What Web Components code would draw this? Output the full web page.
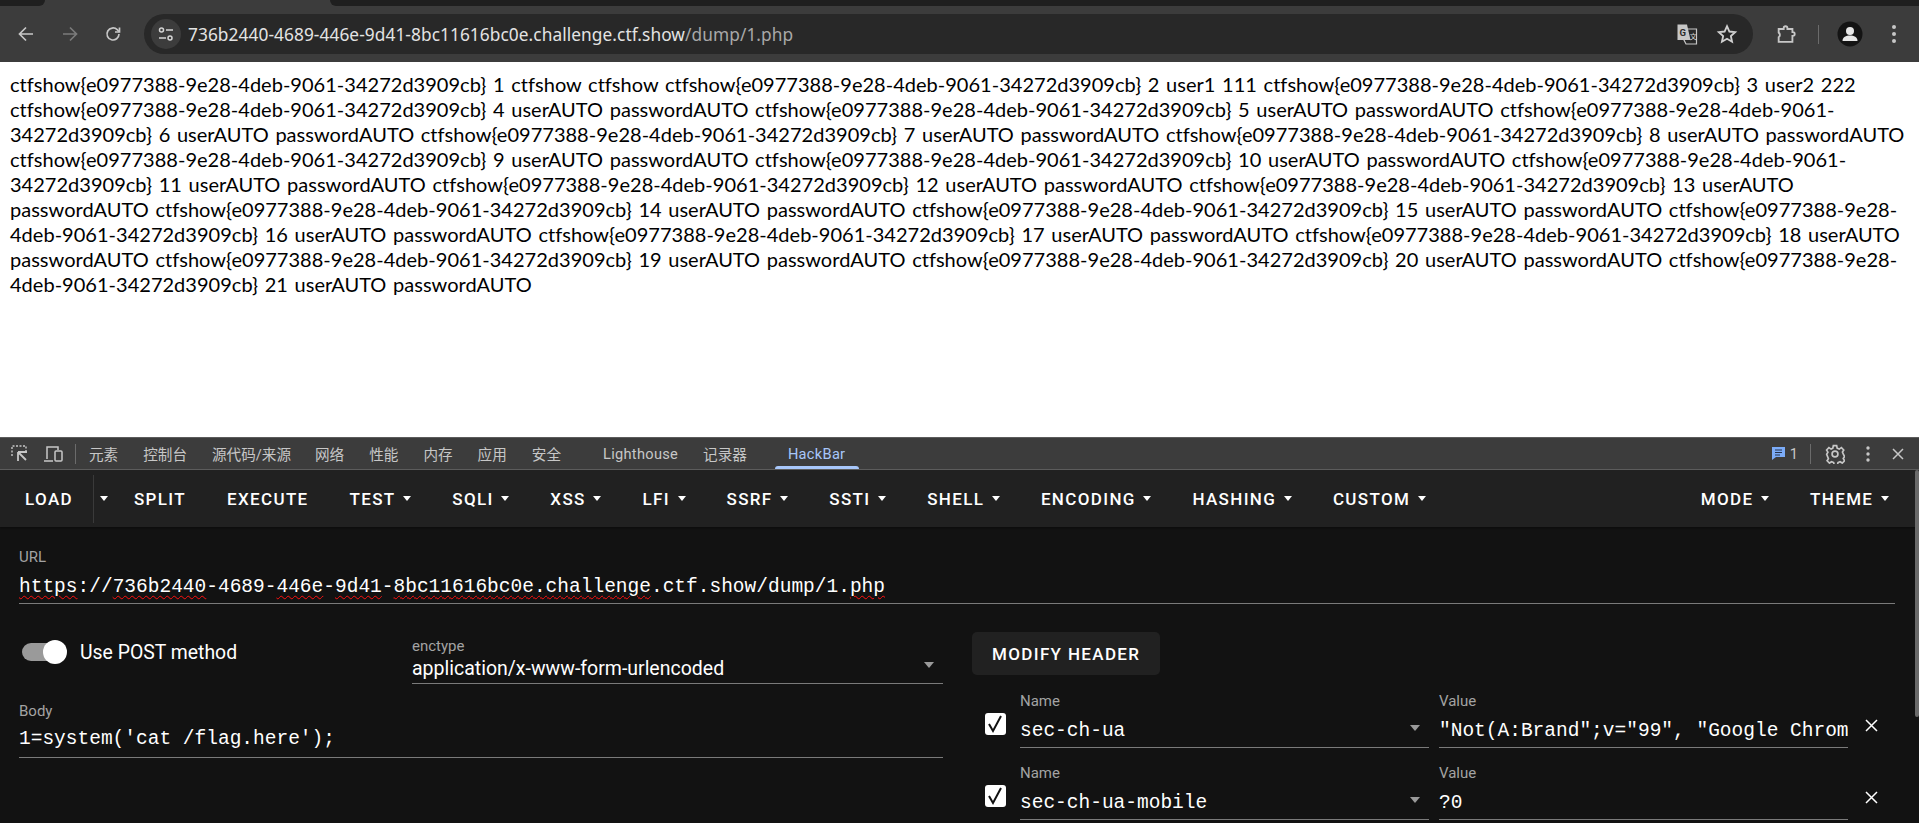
<!DOCTYPE html>
<html><head><meta charset="utf-8"><style>
html,body{margin:0;padding:0;height:100%;overflow:hidden;background:#fff}
</style></head><body>
<template id="t-app"><style>
:host{display:flex;flex-direction:column;height:823px;overflow:hidden;font-family:Roboto,"Noto Sans CJK SC",sans-serif}
</style><browser-bar></browser-bar><dump-page></dump-page><dev-tabs></dev-tabs><hack-bar></hack-bar></template>

<template id="t-browser"><style>
:host{display:block;height:62px;background:#3c3c3c;flex:none}
.strip{height:6px;display:flex;background:#3c3c3c}
.strip i{display:block;height:6px;background:#1f1f1f}
.l{width:45px;border-radius:0 0 9px 0}
.r{flex:1;margin-left:285px;border-radius:0 0 0 9px}
.bar{height:56px;background:#3c3c3c;display:flex;align-items:center;color:#c7c7c7;position:relative}
.nav{display:grid;place-items:center;width:24px;height:24px}
.omni{flex:1;height:40px;background:#282828;border-radius:20px;display:flex;align-items:center;font:17.3px "Noto Sans",sans-serif;color:#e3e3e3;white-space:nowrap}
.tune{width:30px;height:30px;margin-left:7px;border-radius:50%;background:#3c3c3c;display:grid;place-items:center}
.url{margin-left:7px;letter-spacing:.07px}.url span{color:#a8a8a8}
svg{display:block}
</style>
<div class="strip"><i class="l"></i><i class="r"></i></div>
<div class="bar">
 <span class="nav" style="margin-left:14px"><svg width="20" height="20" viewBox="0 0 20 20" fill="none" stroke="#c7c7c7" stroke-width="1.7"><path d="M17 10H4M10 3.500 3.500 10l6.500 6.500"/></svg></span>
 <span class="nav" style="margin-left:20px"><svg width="20" height="20" viewBox="0 0 20 20" fill="none" stroke="#7b7b7b" stroke-width="1.7"><path d="M3 10h13M10 3.500l6.500 6.500L10 16.500"/></svg></span>
 <span class="nav" style="margin-left:19px"><svg width="20" height="20" viewBox="0 0 20 20" fill="none" stroke="#c7c7c7" stroke-width="1.7"><path d="M16 10a6 6 0 1 1-1.800-4.300L16.500 8"/><path d="M16.500 3.500V8H12" /></svg></span>
 <div class="omni" style="margin-left:19px;margin-right:22px">
  <span class="tune"><svg width="18" height="18" viewBox="0 0 18 18" fill="none" stroke="#d5d5d5" stroke-width="1.500"><path d="M9 5h7M2 13h7"/><circle cx="4.500" cy="5" r="2"/><circle cx="13" cy="13" r="2"/></svg></span>
  <span class="url">736b2440-4689-446e-9d41-8bc11616bc0e.challenge.ctf.show<span>/dump/1.php</span></span>
  <span style="flex:1"></span>
  <svg width="24" height="24" viewBox="0 0 24 24" style="margin-right:17px"><path d="M9 7h12.500v15H11l-2-4z" fill="none" stroke="#c7c7c7" stroke-width="1.200"/><path d="M2.500 2.500h9.500l3.500 15.500H2.500z" fill="#c7c7c7"/><text x="4.500" y="14" font-size="9.500" font-weight="700" font-family="Roboto" fill="#2a2a2a">G</text><text x="14.700" y="16.500" font-size="7" font-family="Noto Sans CJK SC" fill="#d5d5d5">文</text></svg>
  <svg width="22" height="22" viewBox="0 0 24 24" style="margin-right:15px" fill="none" stroke="#d0d0d0" stroke-width="2"><path d="M12 3.500l2.600 5.800 6.300.7-4.700 4.200 1.300 6.200L12 17.200l-5.500 3.200 1.300-6.200L3.100 10l6.300-.7z"/></svg>
 </div>
 <svg width="22" height="22" viewBox="0 0 24 24" fill="none" stroke="#c7c7c7" stroke-width="2" style="margin-right:21px"><path d="M4 6.500h5.500V5.500a2 2 0 0 1 4 0v1H19V10h.5a2 2 0 0 1 0 4H19v6.500H4v-5a3 3 0 0 0 0-5z"/></svg>
 <i style="width:1px;height:19px;background:#6b6b6b;margin-right:18px"></i>
 <svg width="26" height="26" viewBox="0 0 26 26" style="margin-right:28px"><circle cx="13" cy="13" r="12.500" fill="#141414"/><circle cx="13" cy="10" r="4" fill="#e8e8e8"/><path d="M5.500 20c0-4 3.500-5.500 7.500-5.500s7.500 1.500 7.500 5.500z" fill="#e8e8e8"/></svg>
 <svg width="6" height="20" viewBox="0 0 6 20" fill="#c7c7c7" style="margin-right:22px"><circle cx="3" cy="3" r="2"/><circle cx="3" cy="10" r="2"/><circle cx="3" cy="17" r="2"/></svg>
</div></template>

<template id="t-dump"><style>
:host{display:block;height:375px;flex:none;background:#fff;color:#000;font:20px/25px Lato,"Noto Sans",sans-serif;letter-spacing:.02px;word-spacing:1.5px;padding:10px 10px 0;box-sizing:border-box;white-space:nowrap}
</style><slot></slot></template>

<template id="t-tabs"><style>
:host{display:flex;align-items:center;height:33px;flex:none;background:#3c3c3c;border-top:1px solid #5c5c5c;border-bottom:1px solid #5c5c5c;box-sizing:border-box;color:#c7c7c7;font:14.600px Roboto,"Noto Sans CJK SC",sans-serif;position:relative}
span{position:relative;white-space:nowrap}
svg{display:block}
.la{letter-spacing:.3px}
.on{color:#a8c7fa}
.on::after{content:"";position:absolute;left:-13px;right:-14px;top:21px;height:3px;background:#a8c7fa;border-radius:3px 3px 0 0}
</style>
 <svg style="margin-left:10px" width="19" height="19" viewBox="0 0 19 19" fill="none" stroke="#c7c7c7" stroke-width="1.400"><path stroke-dasharray="2 1.500" d="M2 12V2h14v5"/><path d="M8 8h9M8 8v9M8 8l8 8" stroke-width="1.800"/></svg>
 <svg style="margin-left:14px" width="20" height="18" viewBox="0 0 20 18" fill="none" stroke="#c7c7c7" stroke-width="1.500"><path d="M4 14V2h11v3M1 16h9"/><rect x="12" y="6" width="7" height="10" rx="1"/></svg>
 <i style="width:1px;height:20px;background:#6b6b6b;margin:0 13px 0 12px"></i>
 <span>元素</span><span style="margin-left:25px">控制台</span><span style="margin-left:25px">源代码/来源</span><span style="margin-left:24px">网络</span><span style="margin-left:25px">性能</span><span style="margin-left:25px">内存</span><span style="margin-left:25px">应用</span><span style="margin-left:25px">安全</span><span class="la" style="margin-left:42px">Lighthouse</span><span style="margin-left:25px">记录器</span><span class="on la" style="margin-left:41px">HackBar</span>
 <span style="flex:1"></span>
 <svg width="15" height="15" viewBox="0 0 15 15" style="margin-right:4px"><path d="M1 1h13v10H5l-4 3z" fill="#7cacf8"/><path d="M4 4h7M4 6.500h7M4 9h5" stroke="#24324d" stroke-width="1.200"/></svg>
 <span style="color:#c7c7c7">1</span>
 <i style="width:1px;height:20px;background:#6b6b6b;margin:0 14px 0 12px"></i>
 <svg width="20" height="20" viewBox="0 0 24 24" fill="none" stroke="#c7c7c7" stroke-width="2" style="margin-right:21px"><circle cx="12" cy="12" r="3.500"/><path d="M10 2h4l.6 3 2.500 1.100 2.600-1.700 2.800 2.800-1.600 2.600 1.100 2.500 1.500 2.700-1.600 2.500 1.600 2.600-2.800 2.800-2.600-1.600-2.500 1-.6 3h-4l-.6-3-2.500-1-2.600 1.600-2.800-2.800 1.600-2.600L2 12.300l1.500-2.500L1.900 7.200l2.800-2.800 2.600 1.700L9.400 5z"/></svg>
 <svg width="4" height="16" viewBox="0 0 4 16" fill="#c7c7c7" style="margin-right:21px"><circle cx="2" cy="2" r="1.700"/><circle cx="2" cy="8" r="1.700"/><circle cx="2" cy="14" r="1.700"/></svg>
 <svg width="14" height="14" viewBox="0 0 14 14" stroke="#c7c7c7" stroke-width="1.500" style="margin-right:14px"><path d="M2 2l10 10M12 2 2 12"/></svg>
</template>

<template id="t-hack"><style>
:host{display:block;flex:1;min-height:0;background:#121212;position:relative;overflow:hidden;color:#fff}
.sb{position:absolute;right:0;top:0;width:4px;height:247px;background:#6a6a6a;border-radius:2px}
main{display:block;padding:21px 24px 0 19px}
.cols{display:grid;grid-template-columns:924px 1fr;column-gap:29px;margin-top:28px}
.opts{display:grid;grid-template-columns:393px 1fr;margin-top:5px;margin-bottom:18px}
</style>
<hb-toolbar></hb-toolbar>
<main>
 <hb-field label="URL"><span><u>https</u>://<u>736b2440</u>-4689-<u>446e</u>-<u>9d41</u>-<u>8bc11616bc0e.challenge</u>.ctf.show/dump/1.<u>php</u></span></hb-field>
 <div class="cols">
  <div>
   <div class="opts"><hb-switch>Use POST method</hb-switch><hb-field label="enctype" sans caret style="height:47px;--vt:19px;--ct:25px">application/x-www-form-urlencoded</hb-field></div>
   <hb-field label="Body" style="--vt:24px">1=system('cat /flag.here');</hb-field>
  </div>
  <div>
   <hb-modify>MODIFY HEADER</hb-modify>
   <hb-header name="sec-ch-ua" value="&quot;Not(A:Brand&quot;;v=&quot;99&quot;, &quot;Google Chrom"></hb-header>
   <hb-header name="sec-ch-ua-mobile" value="?0" style="margin-top:16px"></hb-header>
  </div>
 </div>
</main>
<div class="sb"></div></template>

<template id="t-toolbar"><style>
:host{display:flex;align-items:center;height:57px;background:#212121;padding:0 14px 0 9px;gap:9px;box-sizing:border-box;box-shadow:0 1px 2px rgba(0,0,0,.4);position:relative}
.sp{flex:1}
.sep{width:1px;height:48px;background:#3a3a3a;margin:0 0 0 -9px}
</style>
<hb-btn style="padding-right:20px">LOAD</hb-btn><span class="sep"></span><hb-btn caret style="margin-left:-9px;padding:0 1px 0 6px;--cm:0px"></hb-btn>
<hb-btn>SPLIT</hb-btn><hb-btn>EXECUTE</hb-btn><hb-btn caret>TEST</hb-btn><hb-btn caret>SQLI</hb-btn><hb-btn caret>XSS</hb-btn><hb-btn caret>LFI</hb-btn><hb-btn caret>SSRF</hb-btn><hb-btn caret>SSTI</hb-btn><hb-btn caret>SHELL</hb-btn><hb-btn caret>ENCODING</hb-btn><hb-btn caret>HASHING</hb-btn><hb-btn caret>CUSTOM</hb-btn>
<span class="sp"></span><hb-btn caret>MODE</hb-btn><hb-btn caret>THEME</hb-btn></template>

<template id="t-btn"><style>
:host{display:inline-flex;align-items:center;height:45px;padding:0 16px;font:500 17px Roboto,sans-serif;letter-spacing:1.35px;color:#fff;white-space:nowrap}
i{display:none;width:0;height:0;margin-left:var(--cm,7.700px);border-left:4.500px solid transparent;border-right:4.500px solid transparent;border-top:5px solid #fff}
:host([caret]) i{display:block}
</style><slot></slot><i></i></template>

<template id="t-field"><style>
:host{display:block;position:relative;height:56px;border-bottom:1px solid #7a7a7a;box-sizing:border-box;color:#fff}
label{position:absolute;left:0;top:2px;font:15px/15px Roboto,sans-serif;color:#a3a3a3}
.v{position:absolute;left:0;right:0;top:var(--vt,26px);font:19.500px/26px "Liberation Mono",monospace;white-space:nowrap;overflow:hidden;color:#fff}
:host([sans]) .v{font:19.500px/26px Roboto,sans-serif}
.c{display:none;position:absolute;right:9px;top:var(--ct,33px);width:0;height:0;border-left:5.500px solid transparent;border-right:5.500px solid transparent;border-top:6px solid #9a9a9a}
:host([caret]) .c{display:block}
</style><label></label><div class="v"><slot></slot></div><i class="c"></i></template>

<template id="t-switch"><style>
:host{display:flex;align-items:center;height:46px;align-self:start;margin-top:-8px;padding-left:3px;font:19.400px Roboto,sans-serif;color:#fff;white-space:nowrap}
.t{position:relative;display:block;width:38px;height:18px;border-radius:9px;background:#9a9a9a;margin-right:20px}
.t::after{content:"";position:absolute;right:-7px;top:-3px;width:24px;height:24px;border-radius:50%;background:#fff}
</style><span class="t"></span><slot></slot></template>

<template id="t-modify"><style>
:host{display:inline-flex;align-items:center;height:43px;padding:0 20px;background:#212121;border-radius:5px;font:500 17px Roboto,sans-serif;letter-spacing:1.35px;color:#fff;white-space:nowrap;vertical-align:top}
</style><slot></slot></template>

<template id="t-header"><style>
:host{display:grid;grid-template-columns:48px 410px 410px 1fr;column-gap:0;margin-top:17px;position:relative}
.cb{display:block;width:21px;height:22px;margin:21px 0 0 13px;background:#fff;border-radius:3px;position:relative}
.cb svg{display:block}
.x{margin:27px 0 0 25px;display:block}
.w{margin-left:9px;width:409px}
.n{width:409px}
</style><span class="cb"><svg width="21" height="22" viewBox="0 0 21 22" fill="none" stroke="#111" stroke-width="2"><path d="M4 11l4 7L16 3"/></svg></span><hb-field class="n" caret></hb-field><hb-field class="w"></hb-field><svg class="x" width="13" height="13" viewBox="0 0 13 13" stroke="#fff" stroke-width="1.500"><path d="M1 1l11 11M12 1 1 12"/></svg></template>

<app-root></app-root>
<script>
function def(tag,tpl,extra){customElements.define(tag,class extends HTMLElement{constructor(){super();this.attachShadow({mode:'open'}).appendChild(document.getElementById(tpl).content.cloneNode(true));}connectedCallback(){if(extra)extra(this);}});}
def('app-root','t-app');def('browser-bar','t-browser');
def('dump-page','t-dump',e=>{
 const f='ctfshow{e0977388-9e28-4deb-9061-34272d3909cb}';
 e.innerHTML=[
 `${f} 1 ctfshow ctfshow ${f} 2 user1 111 ${f} 3 user2 222`,
 `${f} 4 userAUTO passwordAUTO ${f} 5 userAUTO passwordAUTO ctfshow{e0977388-9e28-4deb-9061-`,
 `34272d3909cb} 6 userAUTO passwordAUTO ${f} 7 userAUTO passwordAUTO ${f} 8 userAUTO passwordAUTO`,
 `${f} 9 userAUTO passwordAUTO ${f} 10 userAUTO passwordAUTO ctfshow{e0977388-9e28-4deb-9061-`,
 `34272d3909cb} 11 userAUTO passwordAUTO ${f} 12 userAUTO passwordAUTO ${f} 13 userAUTO`,
 `passwordAUTO ${f} 14 userAUTO passwordAUTO ${f} 15 userAUTO passwordAUTO ctfshow{e0977388-9e28-`,
 `4deb-9061-34272d3909cb} 16 userAUTO passwordAUTO ${f} 17 userAUTO passwordAUTO ${f} 18 userAUTO`,
 `passwordAUTO ${f} 19 userAUTO passwordAUTO ${f} 20 userAUTO passwordAUTO ctfshow{e0977388-9e28-`,
 `4deb-9061-34272d3909cb} 21 userAUTO passwordAUTO`].join('<br>');
});
def('dev-tabs','t-tabs');def('hack-bar','t-hack');def('hb-toolbar','t-toolbar');
def('hb-btn','t-btn');
def('hb-field','t-field',e=>{e.shadowRoot.querySelector('label').textContent=e.getAttribute('label')||'';
 e.querySelectorAll('span u').forEach(u=>u.style.cssText='text-decoration:underline wavy #ff1010 1px;text-underline-offset:3px');});
def('hb-switch','t-switch');def('hb-modify','t-modify');
def('hb-header','t-header',e=>{const n=e.shadowRoot.querySelector('.n'),w=e.shadowRoot.querySelector('.w');
 n.setAttribute('label','Name');n.textContent=e.getAttribute('name');w.setAttribute('label','Value');w.textContent=e.getAttribute('value');
 n.shadowRoot.querySelector('label').textContent='Name';w.shadowRoot.querySelector('label').textContent='Value';});
</script>
</body></html>
